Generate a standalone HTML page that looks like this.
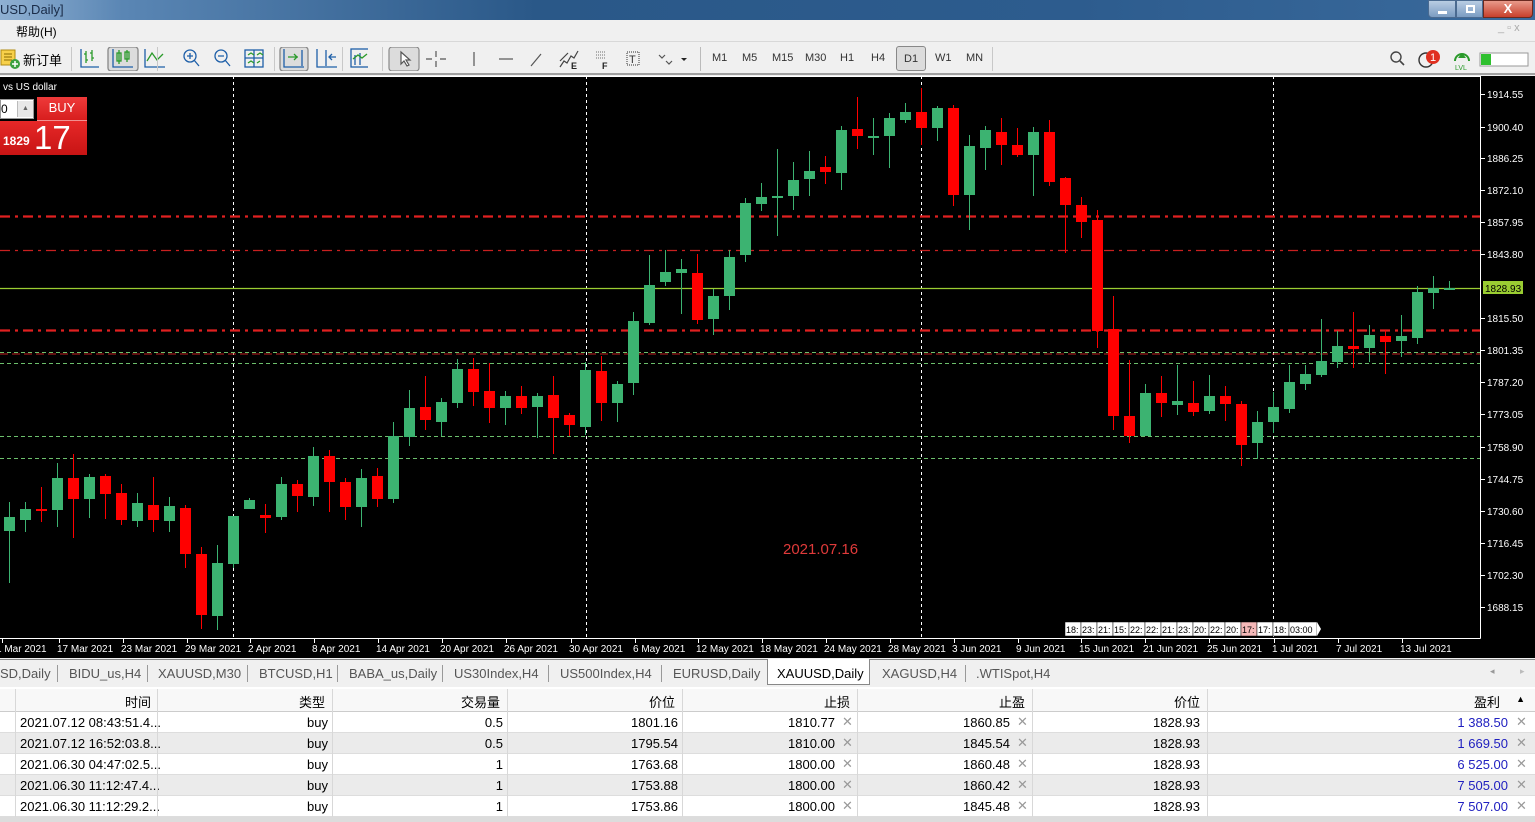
<!DOCTYPE html>
<html><head><meta charset="utf-8"><style>
*{margin:0;padding:0;box-sizing:border-box}
body{width:1535px;height:822px;overflow:hidden;background:#f0f0f0;font-family:"Liberation Sans","Noto Sans CJK SC",sans-serif;position:relative;font-size:12px;color:#000}
.abs{position:absolute}
#title{left:0;top:0;width:1535px;height:20px;background:linear-gradient(90deg,#8fb0d2 0,#5a86b4 8%,#2a5888 35%,#2d5c8e 70%,#3a6a9c 100%)}
#menu{left:0;top:20px;width:1535px;height:22px;background:#f0f0f0;border-bottom:1px solid #d8d8d8}
#tb{left:0;top:42px;width:1535px;height:33px;background:#f0f0f0;border-bottom:2px solid #a0a0a0}
.sep{position:absolute;top:5px;width:1px;height:24px;background:#c8c8c8}
.tf{position:absolute;top:10px;font-size:11px;color:#333}
#chart{left:0;top:76px;width:1535px;height:582px;background:#000}
#tabs{left:0;top:659px;width:1535px;height:27px;background:#f0f0f0;border-top:1px solid #888}
.tab{position:absolute;top:6px;font-size:13px;color:#555}
.tsep{position:absolute;top:5px;width:1px;height:17px;background:#999}
#tbl{left:0;top:687px;width:1535px;height:135px;background:#fff}
.row{position:absolute;left:0;width:1535px;height:21px;border-bottom:1px solid #ddd}
.c{position:absolute;top:3px;font-size:13px;text-align:right;white-space:nowrap}
.vl{position:absolute;width:1px;background:#d8d8d8}
.x{position:absolute;top:2px;color:#999;font-size:13px}
</style></head><body>
<div id="title" class="abs"><span style="position:absolute;left:0;top:2px;color:#1a2c48;font-size:13px">USD,Daily]</span>
<div style="position:absolute;left:1428px;top:0;width:28px;height:18px;background:linear-gradient(#b9cde3,#7b9cc2);border:1px solid #4a6a90;border-radius:0 0 0 4px"><div style="position:absolute;left:9px;top:10px;width:9px;height:3px;background:#fff"></div></div>
<div style="position:absolute;left:1456px;top:0;width:27px;height:18px;background:linear-gradient(#b9cde3,#7b9cc2);border:1px solid #4a6a90"><div style="position:absolute;left:9px;top:4px;width:9px;height:8px;border:2px solid #fff"></div></div>
<div style="position:absolute;left:1483px;top:0;width:50px;height:18px;background:linear-gradient(#e89a8a,#c8402c);border:1px solid #6a2a20;border-radius:0 0 4px 0;color:#fff;font-weight:bold;text-align:center;font-size:13px;line-height:16px">X</div>
</div>
<div id="menu" class="abs"><span style="position:absolute;left:16px;top:3px;font-size:12px">帮助(H)</span>
<span style="position:absolute;left:1498px;top:2px;color:#aaa;font-size:11px">_ ▫ x</span></div>
<div id="tb" class="abs">
<svg class="abs" style="left:0;top:6px" width="22" height="22"><rect x="1" y="2" width="14" height="15" fill="#f7d04a" stroke="#b08a10"/><line x1="4" y1="6" x2="12" y2="6" stroke="#8a6a00"/><line x1="4" y1="9" x2="12" y2="9" stroke="#8a6a00"/><line x1="4" y1="12" x2="12" y2="12" stroke="#8a6a00"/><circle cx="15" cy="16" r="5" fill="#3aa040"/><path d="M15 13v6M12 16h6" stroke="#fff" stroke-width="1.5"/></svg>
<span style="position:absolute;left:23px;top:8px;font-size:13px">新订单</span>
<div class="sep" style="left:71px"></div>
<svg class="abs" style="left:78px;top:5px" width="290" height="24" fill="none" stroke-width="1.3">
<g stroke="#1e5fa8"><path d="M3 2v18h18"/></g><g stroke="#2a9a2a"><path d="M8 4v12M6 7h2M8 13h2M14 3v11M12 6h2M14 11h2"/></g>
<rect x="30" y="0" width="30" height="24" rx="3" fill="#dcdcdc" stroke="#888"/><g stroke="#1e5fa8"><path d="M35 2v18h20"/></g><g stroke="#2a9a2a"><rect x="39" y="6" width="4" height="8"/><path d="M41 3v14"/><rect x="47" y="5" width="4" height="7"/><path d="M49 3v12"/></g>
<g stroke="#1e5fa8"><path d="M67 2v18h20"/></g><path d="M69 14l5-8 5 7 6-6" stroke="#2a9a2a"/>
<g stroke="#1e5fa8"><circle cx="112" cy="9" r="6"/><path d="M116 13l5 6M109 9h6M112 6v6"/><circle cx="143" cy="9" r="6"/><path d="M147 13l5 6M140 9h6"/></g>
<g stroke="#1e5fa8"><rect x="167" y="3" width="18" height="17"/><path d="M167 11h18M176 3v17"/></g><path d="M170 8l3-2 3 2M179 8l3-2 3 2M170 16l3-2 3 2M179 16l3-2" stroke="#2a9a2a"/>
<rect x="202" y="0" width="28" height="24" rx="3" fill="#dcdcdc" stroke="#888"/><g stroke="#1e5fa8"><path d="M206 2v18h20M224 3v16"/></g><path d="M210 10h10M216 7l3 3-3 3" stroke="#2a9a2a"/>
<g stroke="#1e5fa8"><path d="M239 2v18h20M248 3v16"/></g><path d="M258 10h-6M254 7l-3 3 3 3" stroke="#1e5fa8"/>
<g stroke="#1e5fa8"><rect x="273" y="2" width="18" height="18"/><path d="M277 8v10M282 6v12"/></g><path d="M275 12l5-4 4 3 5-4" stroke="#2a9a2a"/>
</svg>
<div class="sep" style="left:157px"></div><div class="sep" style="left:274px"></div><div class="sep" style="left:342px"></div><div class="sep" style="left:382px"></div>
<svg class="abs" style="left:388px;top:5px" width="310" height="24" fill="none" stroke="#555" stroke-width="1.2">
<rect x="1" y="0" width="30" height="24" rx="3" fill="#dcdcdc" stroke="#888"/><path d="M13 5l0 12 3-3 3 5 2-1-3-5h4z" fill="#fff"/>
<path d="M48 4v6M48 14v6M38 12h6M52 12h6"/>
<path d="M86 5v14"/><path d="M111 12h14"/><path d="M143 19l10-12"/>
<path d="M172 20l4-6 3 2 4-7 3 2 4-7M172 14l8-8" stroke="#444"/><text x="183" y="22" font-size="9" font-weight="bold" fill="#222" stroke="none">E</text>
<g stroke="#888" stroke-dasharray="1 1"><path d="M208 5h10M208 8h10M208 11h10"/></g><text x="214" y="22" font-size="9" font-weight="bold" fill="#222" stroke="none">F</text>
<rect x="239" y="5" width="12" height="13" stroke-dasharray="1 1"/><text x="241" y="16" font-size="11" fill="#333" stroke="none">T</text>
<path d="M271 8l3 3 3-3M278 14l3 3 3-3"/><path d="M293 11l3 3 3-3z" fill="#222" stroke="none"/>
</svg>
<div class="sep" style="left:700px;background:#bbb"></div>
<span class="tf" style="left:712px">M1</span><span class="tf" style="left:742px">M5</span><span class="tf" style="left:772px">M15</span><span class="tf" style="left:805px">M30</span><span class="tf" style="left:840px">H1</span><span class="tf" style="left:871px">H4</span>
<div style="position:absolute;left:896px;top:4px;width:30px;height:25px;border:1px solid #888;border-radius:3px;background:#dcdcdc"></div><span class="tf" style="left:904px;top:11px">D1</span>
<span class="tf" style="left:935px">W1</span><span class="tf" style="left:966px">MN</span>
<div class="sep" style="left:992px"></div>
<svg class="abs" style="left:1388px;top:7px" width="145" height="22" fill="none">
<circle cx="8" cy="8" r="5" stroke="#444" stroke-width="1.4"/><path d="M12 12l4 4" stroke="#444" stroke-width="1.6"/>
<circle cx="38" cy="11" r="7" stroke="#333" stroke-width="1.4"/><circle cx="45" cy="8" r="7" fill="#e03020"/><text x="42" y="12" font-size="11" fill="#fff" font-family="Liberation Sans">1</text>
<path d="M67 12a7 7 0 0 1 14 0" stroke="#2a9a2a" stroke-width="2"/><path d="M74 4l-4 5h8z" fill="#2a9a2a"/><text x="67" y="21" font-size="7" fill="#2a9a2a" font-family="Liberation Sans">LVL</text>
<rect x="92" y="4" width="48" height="13" fill="#fff" stroke="#999"/><rect x="93" y="5" width="10" height="11" fill="#2fc02f"/>
</svg>
</div>

<div id="chart" class="abs"><svg id="cs" width="1535" height="582" style="position:absolute;left:0;top:0"></svg>
<span style="position:absolute;left:3px;top:6px;color:#fff;font-size:10px">vs US dollar</span>
<div style="position:absolute;left:0;top:23px;width:34px;height:20px;background:#fff;border:1px solid #999;font-size:12px;line-height:18px">0<div style="position:absolute;left:16px;top:1px;width:16px;height:16px;background:#e8e8e8;border-left:1px solid #bbb;font-size:7px;text-align:center;line-height:16px;color:#666">▲</div></div>
<div style="position:absolute;left:37px;top:21px;width:50px;height:24px;background:linear-gradient(#ee3a3a,#d81e1e);color:#fff;text-align:center;font-size:13px;line-height:22px;border-bottom:1px solid #f09090">BUY</div>
<div style="position:absolute;left:0;top:45px;width:87px;height:34px;background:linear-gradient(#e62828,#c81414)"><span style="position:absolute;left:3px;top:13px;color:#fff;font-size:12px;font-weight:bold">1829</span><span style="position:absolute;left:34px;top:-2px;color:#fff;font-size:33px">17</span></div>
</div>

<div id="tabs" class="abs">
<span class="tab" style="left:0">SD,Daily</span><div class="tsep" style="left:57px"></div>
<span class="tab" style="left:69px">BIDU_us,H4</span><div class="tsep" style="left:147px"></div>
<span class="tab" style="left:158px">XAUUSD,M30</span><div class="tsep" style="left:247px"></div>
<span class="tab" style="left:259px">BTCUSD,H1</span><div class="tsep" style="left:337px"></div>
<span class="tab" style="left:349px">BABA_us,Daily</span><div class="tsep" style="left:442px"></div>
<span class="tab" style="left:454px">US30Index,H4</span><div class="tsep" style="left:548px"></div>
<span class="tab" style="left:560px">US500Index,H4</span><div class="tsep" style="left:661px"></div>
<span class="tab" style="left:673px">EURUSD,Daily</span>
<div style="position:absolute;left:767px;top:-1px;width:103px;height:26px;background:#fff;border:1px solid #888;border-top:none"></div>
<span class="tab" style="left:777px;color:#000">XAUUSD,Daily</span>
<span class="tab" style="left:882px">XAGUSD,H4</span><div class="tsep" style="left:965px"></div>
<span class="tab" style="left:976px">.WTISpot,H4</span>
<span class="tab" style="left:1490px;font-size:9px;color:#999">◂</span><span class="tab" style="left:1520px;font-size:9px;color:#bbb">▸</span>
</div>

<div id="tbl" class="abs">
<div class="row" style="top:2px;height:23px;background:#f8f8f8;border-bottom:1px solid #ccc">
<span class="c" style="right:1384px">时间</span><span class="c" style="right:1210px">类型</span><span class="c" style="right:1035px">交易量</span><span class="c" style="right:860px">价位</span><span class="c" style="right:685px">止损</span><span class="c" style="right:510px">止盈</span><span class="c" style="right:335px">价位</span><span class="c" style="right:35px">盈利</span><span class="c" style="right:10px;font-size:9px;top:5px">▲</span></div>
<div id="rows"></div>
<div style="position:absolute;left:0;top:130px;width:1535px;height:5px;background:#dcdcdc"></div>
</div>

<span style="position:absolute;left:783px;top:541px;color:#e03a3a;font-size:15px">2021.07.16</span>

<script>
var C=[[517,531,1,502,583],[509,520,1,502,532],[509,510,0,487,522],[478,510,1,463,527],[478,499,0,454,538],[477,499,1,474,518],[476,494,0,474,519],[493,520,0,484,525],[503,521,1,493,527],[505,520,0,477,532],[506,521,1,497,532],[508,554,0,505,568],[554,615,0,547,629],[563,616,1,545,630],[516,564,1,516,568],[500,509,1,498,509],[515,518,0,504,533],[484,517,1,477,520],[484,496,0,480,512],[456,497,1,447,506],[456,482,0,450,512],[482,507,0,478,520],[478,507,1,469,527],[476,499,0,468,507],[436,499,1,422,503],[408,437,1,390,446],[407,420,0,376,430],[402,422,1,398,436],[369,403,1,359,408],[369,392,0,358,406],[391,408,0,363,423],[396,408,1,391,425],[396,408,0,386,414],[396,407,1,393,438],[395,418,0,376,454],[415,425,0,413,436],[370,427,1,362,435],[371,403,0,356,421],[384,403,1,381,422],[321,383,1,312,395],[285,323,1,255,325],[272,282,1,250,286],[269,273,1,259,314],[273,320,0,254,324],[296,319,1,289,335],[257,296,1,250,310],[203,255,1,198,262],[197,204,1,183,211],[196,197,1,149,236],[180,196,1,162,210],[171,179,1,151,196],[167,172,0,156,184],[130,173,1,126,190],[129,136,0,97,149],[136,137,1,118,155],[118,136,1,113,168],[112,120,1,103,123],[112,128,0,88,145],[108,128,1,106,141],[108,195,0,105,206],[146,195,1,135,230],[130,148,1,126,170],[132,145,0,118,165],[145,155,0,128,157],[132,155,1,127,196],[132,182,0,120,186],[178,205,0,177,253],[205,222,0,197,238],[220,331,0,210,348],[329,416,0,296,430],[416,436,0,360,443],[393,436,1,384,436],[393,403,0,376,417],[401,405,1,365,415],[403,412,0,381,416],[396,411,1,375,414],[396,404,0,386,421],[404,445,0,401,466],[422,443,1,411,459],[407,422,1,392,433],[382,409,1,365,413],[374,384,1,365,390],[361,375,1,319,377],[346,362,1,331,368],[346,349,0,312,368],[335,348,1,325,362],[336,342,0,330,374],[336,341,1,315,357],[292,338,1,286,344],[288,293,1,276,309],[288,290,1,281,290]];
var s='',T=76;
function hl(y,col,dash,w){s+='<line x1="0" y1="'+(y-T+.5)+'" x2="1480" y2="'+(y-T+.5)+'" stroke="'+col+'" stroke-width="'+w+'" stroke-dasharray="'+dash+'"/>';}
[233,586,921,1273].forEach(function(x){s+='<line x1="'+(x+.5)+'" y1="0" x2="'+(x+.5)+'" y2="562" stroke="#fff" stroke-dasharray="3 3"/>';});
hl(216,'#e02020','10 5 3 5',2.2);hl(250,'#c82020','10 5 3 5',1.2);hl(330,'#e02020','10 5 3 5',2.2);
hl(352,'#6cbf6c','4 3',1);hl(353.5,'#c02020','8 4',1);hl(363,'#6cbf6c','4 3',1);hl(436,'#6cbf6c','4 3',1);hl(458,'#6cbf6c','4 3',1);
hl(288,'#9acd32','',1.2);
C.forEach(function(c,i){var x=9+16*i,col=c[2]?'#3cb371':'#ff0000';s+='<line x1="'+(x+.5)+'" y1="'+(c[3]-T)+'" x2="'+(x+.5)+'" y2="'+(c[4]-T)+'" stroke="'+col+'"/>';var h=Math.max(c[1]-c[0],2);s+='<rect x="'+(x-5)+'" y="'+(c[0]-T)+'" width="11" height="'+h+'" fill="'+col+'"/>';});
s+='<line x1="1480.5" y1="0" x2="1480.5" y2="562.5" stroke="#fff"/><line x1="0" y1="562.5" x2="1480.5" y2="562.5" stroke="#fff"/><line x1="0" y1="0.5" x2="1480" y2="0.5" stroke="#fff"/>';
var P=[['1914.55',94],['1900.40',127],['1886.25',158],['1872.10',190],['1857.95',222],['1843.80',254],['1815.50',318],['1801.35',350],['1787.20',382],['1773.05',414],['1758.90',447],['1744.75',479],['1730.60',511],['1716.45',543],['1702.30',575],['1688.15',607]];
P.forEach(function(p){var y=p[1]-T;s+='<line x1="1480" y1="'+(y+.5)+'" x2="1485" y2="'+(y+.5)+'" stroke="#fff"/><text x="1487" y="'+(y+4)+'" fill="#fff" font-size="10" font-family="Liberation Sans">'+p[0]+'</text>';});
s+='<rect x="1483" y="'+(288-T-7)+'" width="40" height="13" fill="#9acd32"/><text x="1485" y="'+(288-T+4)+'" fill="#000" font-size="10" font-family="Liberation Sans">1828.93</text>';
var D=[['1 Mar 2021',-4],['17 Mar 2021',57],['23 Mar 2021',121],['29 Mar 2021',185],['2 Apr 2021',248],['8 Apr 2021',312],['14 Apr 2021',376],['20 Apr 2021',440],['26 Apr 2021',504],['30 Apr 2021',569],['6 May 2021',633],['12 May 2021',696],['18 May 2021',760],['24 May 2021',824],['28 May 2021',888],['3 Jun 2021',952],['9 Jun 2021',1016],['15 Jun 2021',1079],['21 Jun 2021',1143],['25 Jun 2021',1207],['1 Jul 2021',1272],['7 Jul 2021',1336],['13 Jul 2021',1400]];
D.forEach(function(d){s+='<line x1="'+(d[0]=='1 Mar 2021'?2:d[1]+2)+'.5" y1="562" x2="'+(d[0]=='1 Mar 2021'?2:d[1]+2)+'.5" y2="567" stroke="#fff"/><text x="'+d[1]+'" y="576" fill="#fff" font-size="10" font-family="Liberation Sans">'+d[0]+'</text>';});
var ts=['18:','23:','21:','15:','22:','22:','21:','23:','20:','22:','20:','17:','17:','18:','03:00'];var x=1065;
ts.forEach(function(t,i){var w=i==14?28:16;s+='<rect x="'+x+'" y="546" width="'+w+'" height="14" fill="'+(i==11?'#f4b8b8':'#fff')+'" stroke="#000" stroke-width=".5"/><text x="'+(x+1)+'" y="557" font-size="9" font-family="Liberation Sans" fill="#000">'+t+'</text>';x+=w;});
s+='<path d="M'+x+' 546l4 7-4 7z" fill="#fff"/>';
document.getElementById('cs').innerHTML=s;
var R=[['2021.07.12 08:43:51.4...','0.5','1801.16','1810.77','1860.85','1 388.50'],['2021.07.12 16:52:03.8...','0.5','1795.54','1810.00','1845.54','1 669.50'],['2021.06.30 04:47:02.5...','1','1763.68','1800.00','1860.48','6 525.00'],['2021.06.30 11:12:47.4...','1','1753.88','1800.00','1860.42','7 505.00'],['2021.06.30 11:12:29.2...','1','1753.86','1800.00','1845.48','7 507.00']];
var h='';R.forEach(function(r,i){h+='<div class="row" style="top:'+(25+i*21)+'px;background:'+(i%2?'#ebebeb':'#fff')+'"><span class="c" style="left:20px;text-align:left">'+r[0]+'</span><span class="c" style="right:1207px">buy</span><span class="c" style="right:1032px">'+r[1]+'</span><span class="c" style="right:857px">'+r[2]+'</span><span class="c" style="right:700px">'+r[3]+'</span><span class="x" style="left:842px">✕</span><span class="c" style="right:525px">'+r[4]+'</span><span class="x" style="left:1017px">✕</span><span class="c" style="right:335px">1828.93</span><span class="c" style="right:27px;color:#2020c0">'+r[5]+'</span><span class="x" style="left:1516px">✕</span></div>';});
[15,157,332,507,682,857,1032,1207].forEach(function(x){h+='<div class="vl" style="left:'+x+'px;top:2px;height:128px"></div>';});
document.getElementById('rows').innerHTML=h;
</script>
</body></html>
